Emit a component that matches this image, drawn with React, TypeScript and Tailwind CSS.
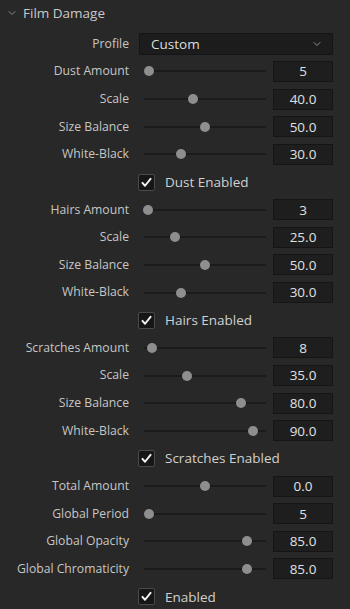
import { ChevronDown } from 'lucide-react';

type Row =
  | { kind: 'slider'; label: string; value: string; pos: number }
  | { kind: 'check'; label: string };

// pos is where the thumb sits on the track, 0-100
const rows: Row[] = [
  { kind: 'slider', label: 'Dust Amount', value: '5', pos: 3.3 },
  { kind: 'slider', label: 'Scale', value: '40.0', pos: 40 },
  { kind: 'slider', label: 'Size Balance', value: '50.0', pos: 50 },
  { kind: 'slider', label: 'White-Black', value: '30.0', pos: 30 },
  { kind: 'check', label: 'Dust Enabled' },
  { kind: 'slider', label: 'Hairs Amount', value: '3', pos: 2.5 },
  { kind: 'slider', label: 'Scale', value: '25.0', pos: 25 },
  { kind: 'slider', label: 'Size Balance', value: '50.0', pos: 50 },
  { kind: 'slider', label: 'White-Black', value: '30.0', pos: 30 },
  { kind: 'check', label: 'Hairs Enabled' },
  { kind: 'slider', label: 'Scratches Amount', value: '8', pos: 6 },
  { kind: 'slider', label: 'Scale', value: '35.0', pos: 35 },
  { kind: 'slider', label: 'Size Balance', value: '80.0', pos: 80 },
  { kind: 'slider', label: 'White-Black', value: '90.0', pos: 90 },
  { kind: 'check', label: 'Scratches Enabled' },
  { kind: 'slider', label: 'Total Amount', value: '0.0', pos: 50 },
  { kind: 'slider', label: 'Global Period', value: '5', pos: 3.3 },
  { kind: 'slider', label: 'Global Opacity', value: '85.0', pos: 85 },
  { kind: 'slider', label: 'Global Chromaticity', value: '85.0', pos: 85 },
  { kind: 'check', label: 'Enabled' },
];

function Slider({ pos }: { pos: number }) {
  return (
    <div className="relative h-full w-[130px]">
      <div className="absolute left-[5px] right-[3px] top-1/2 h-[2px] -translate-y-1/2 bg-[#1b1b1b]" />
      <div
        className="absolute top-1/2 h-[10px] w-[10px] -translate-x-1/2 -translate-y-1/2 rounded-full bg-[#8e8e8e]"
        style={{ left: 6 + pos * 1.2 }}
      />
    </div>
  );
}

function CheckBox() {
  return (
    <div className="flex h-[17px] w-[17px] items-center justify-center rounded-[2px] border border-[#4a4a4a] bg-[#161616]">
      <svg className="h-[13px] w-[13px]" viewBox="0 0 16 16" fill="none">
        <path
          d="M3 8.5l3.2 3.5L13 3.5"
          stroke="#f2f2f2"
          strokeWidth={2.4}
          strokeLinecap="round"
          strokeLinejoin="round"
        />
      </svg>
    </div>
  );
}

export default function App() {
  return (
    <div
      className="h-[609px] w-[350px] overflow-hidden bg-[#282828] text-[12.2px] text-[#c6c6c6]"
      style={{ fontFamily: '"Open Sans", "Noto Sans", sans-serif' }}
    >
      {/* Header */}
      <div className="flex h-[26px] items-center pl-[6px]">
        <ChevronDown className="h-[12px] w-[12px] text-[#a0a0a0]" strokeWidth={1.6} />
        <span className="ml-[5px] text-[13.5px] text-[#c8c8c8]">Film Damage</span>
      </div>

      <div className="pt-[4px]">
        {/* Profile */}
        <div className="flex h-[27.65px] items-center">
          <div className="w-[129px] text-right">Profile</div>
          <div className="ml-[10px] flex h-[22px] w-[194px] items-center justify-between border border-[#151515] bg-[#1c1c1c] pl-[11px] pr-[9px]">
            <span className="text-[13.5px] text-[#dedede]">Custom</span>
            <ChevronDown className="h-[12px] w-[12px] text-[#9a9a9a]" strokeWidth={1.8} />
          </div>
        </div>

        {rows.map((row, i) =>
          row.kind === 'slider' ? (
            <div key={i} className="flex h-[27.65px] items-center">
              <div className="w-[129px] whitespace-nowrap text-right">{row.label}</div>
              <div className="ml-[10px] h-full">
                <Slider pos={row.pos} />
              </div>
              <div className="ml-[4px] flex h-[21px] w-[60px] items-center justify-center border border-[#151515] bg-[#1e1e1e] text-[13.5px] text-[#e0e0e0]">
                {row.value}
              </div>
            </div>
          ) : (
            <div key={i} className="flex h-[27.65px] items-center">
              <div className="ml-[138px] flex items-center">
                <CheckBox />
                <span className="ml-[10px] text-[13.5px] text-[#d0d0d0]">{row.label}</span>
              </div>
            </div>
          )
        )}
      </div>
    </div>
  );
}
